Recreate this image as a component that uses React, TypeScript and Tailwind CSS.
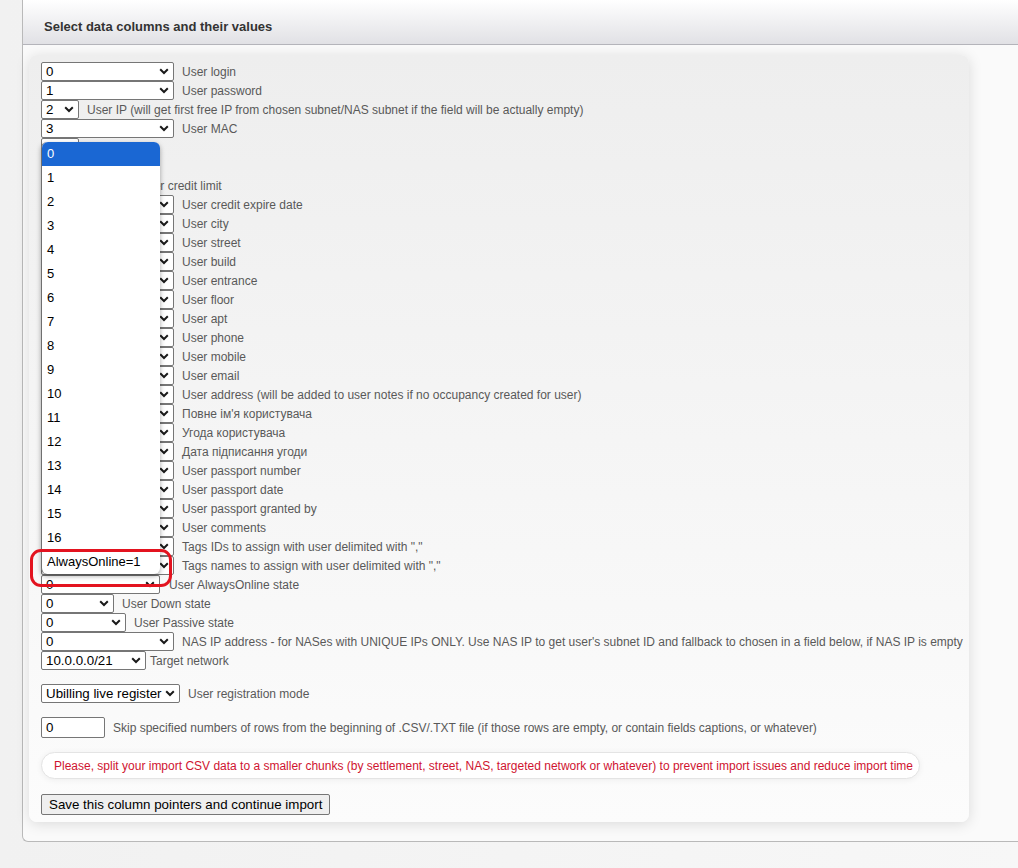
import React from "react";

interface ColumnRow {
  value: string;
  width: number;
  gap?: number;
  label: string;
}

// values behind the opened option list are left blank, the list covers them
const rows: ColumnRow[] = [
  { value: "0", width: 133, label: "User login" },
  { value: "1", width: 133, label: "User password" },
  { value: "2", width: 38, label: "User IP (will get first free IP from chosen subnet/NAS subnet if the field will be actually empty)" },
  { value: "3", width: 133, label: "User MAC" },
  { value: "", width: 38, label: "" },
  { value: "", width: 38, label: "" },
  { value: "", width: 90, label: "User credit limit" },
  { value: "", width: 133, label: "User credit expire date" },
  { value: "", width: 133, label: "User city" },
  { value: "", width: 133, label: "User street" },
  { value: "", width: 133, label: "User build" },
  { value: "", width: 133, label: "User entrance" },
  { value: "", width: 133, label: "User floor" },
  { value: "", width: 133, label: "User apt" },
  { value: "", width: 133, label: "User phone" },
  { value: "", width: 133, label: "User mobile" },
  { value: "", width: 133, label: "User email" },
  { value: "", width: 133, label: "User address (will be added to user notes if no occupancy created for user)" },
  { value: "", width: 133, label: "Повне ім'я користувача" },
  { value: "", width: 133, label: "Угода користувача" },
  { value: "", width: 133, label: "Дата підписання угоди" },
  { value: "", width: 133, label: "User passport number" },
  { value: "", width: 133, label: "User passport date" },
  { value: "", width: 133, label: "User passport granted by" },
  { value: "", width: 133, label: "User comments" },
  { value: "", width: 133, label: 'Tags IDs to assign with user delimited with ","' },
  { value: "", width: 133, label: 'Tags names to assign with user delimited with ","' },
];

const tailRows: ColumnRow[] = [
  { value: "0", width: 73, label: "User Down state" },
  { value: "0", width: 85, label: "User Passive state" },
  {
    value: "0",
    width: 133,
    label:
      "NAS IP address - for NASes with UNIQUE IPs ONLY. Use NAS IP to get user's subnet ID and fallback to chosen in a field below, if NAS IP is empty",
  },
  { value: "10.0.0.0/21", width: 105, gap: 4, label: "Target network" },
];

const options = [...Array(17)].map((_, i) => String(i)).concat("AlwaysOnline=1");

function Chevron() {
  return (
    <svg width="10" height="7" viewBox="0 0 10 7" className="shrink-0">
      <path d="M1.2 1.3 L5 5 L8.8 1.3" fill="none" stroke="#1a1a1a" strokeWidth="2" />
    </svg>
  );
}

function FakeSelect({ value, width }: { value: string; width: number }) {
  return (
    <div
      className="flex h-[19px] shrink-0 items-center justify-between rounded-[2px] border border-[#767676] bg-white pl-[4px] pr-[4px] text-[13.33px] leading-none text-black"
      style={{ width }}
    >
      <span>{value}</span>
      <Chevron />
    </div>
  );
}

function Row({ row }: { row: ColumnRow }) {
  return (
    <div className="flex h-[19px] items-center" style={{ gap: row.gap ?? 8 }}>
      <FakeSelect value={row.value} width={row.width} />
      <span className="whitespace-nowrap text-[12px] text-[#595959]">{row.label}</span>
    </div>
  );
}

export default function App() {
  return (
    <div className="min-h-screen bg-gradient-to-r from-[#f1f1f1] to-[#f7f7f7] font-['Liberation_Sans',Arial,sans-serif]">
      <div className="ml-[22px] h-[842px] rounded-bl-[6px] border-b border-l border-[#b9b9b9] bg-[#fafafa]">
        {/* Section header */}
        <div className="h-[45px] border-b border-[#b4b4ba] bg-gradient-to-b from-white to-[#e1e1e5] pl-[21px] pt-[19px]">
          <h2 className="text-[13px] font-bold leading-[15px] text-[#333]">Select data columns and their values</h2>
        </div>

        {/* Column mapping panel */}
        <div className="ml-[6px] mt-[10px] w-[940px] rounded-[8px] bg-gradient-to-b from-[#eeeeee] to-[#fcfcfc] pb-[6px] pl-[12px] pt-[7px] shadow-[0_2px_14px_rgba(0,0,0,0.13)]">
          {rows.map((row, idx) => (
            <Row key={idx} row={row} />
          ))}

          {/* AlwaysOnline select with its opened option list */}
          <div className="flex h-[19px] items-center gap-[9px]">
            <div className="relative">
              <FakeSelect value="0" width={119} />
              <div className="absolute bottom-full left-0 z-10 mb-[1px] w-[119px] rounded-[6px] border-l border-[#6f6f6f] bg-white shadow-[0_2px_5px_rgba(0,0,0,0.35)]">
                {options.map((opt, i) => (
                  <div
                    key={opt}
                    className={
                      i === 0
                        ? "flex h-[24px] items-center rounded-t-[6px] bg-[#1a67d3] pl-[5px] text-[13px] text-white"
                        : "flex h-[24px] items-center pl-[5px] text-[13px] text-black"
                    }
                  >
                    {opt}
                  </div>
                ))}
              </div>
              <div className="absolute left-[-11px] top-[-26px] z-20 h-[38px] w-[142px] rounded-[11px] border-[3px] border-[#e3131f]" />
            </div>
            <span className="whitespace-nowrap text-[12px] text-[#595959]">User AlwaysOnline state</span>
          </div>

          {tailRows.map((row, idx) => (
            <Row key={idx} row={row} />
          ))}

          <div className="mt-[14px]">
            <Row row={{ value: "Ubilling live register", width: 139, label: "User registration mode" }} />
          </div>

          <div className="mt-[14px] flex items-center gap-[8px]">
            <div className="flex h-[21px] w-[64px] items-center rounded-[2px] border border-[#767676] bg-white pl-[4px] text-[13.33px] text-black">
              0
            </div>
            <span className="text-[12px] text-[#595959]">
              Skip specified numbers of rows from the beginning of .CSV/.TXT file (if those rows are empty, or contain fields captions, or whatever)
            </span>
          </div>

          <div className="mt-[14px] inline-flex h-[27px] items-center rounded-full border border-[#e4e4e4] bg-white pl-[12px] pr-[6px] shadow-[0_1px_6px_rgba(0,0,0,0.06)]">
            <span className="whitespace-nowrap text-[12px] text-[#cf1430]">
              Please, split your import CSV data to a smaller chunks (by settlement, street, NAS, targeted network or whatever) to prevent import issues and reduce import time
            </span>
          </div>

          <div className="mt-[13px]">
            <button className="h-[21px] rounded-[2px] border border-[#767676] bg-[#efefef] px-[7px] text-[13.33px] leading-none text-black">
              Save this column pointers and continue import
            </button>
          </div>
        </div>
      </div>
    </div>
  );
}
